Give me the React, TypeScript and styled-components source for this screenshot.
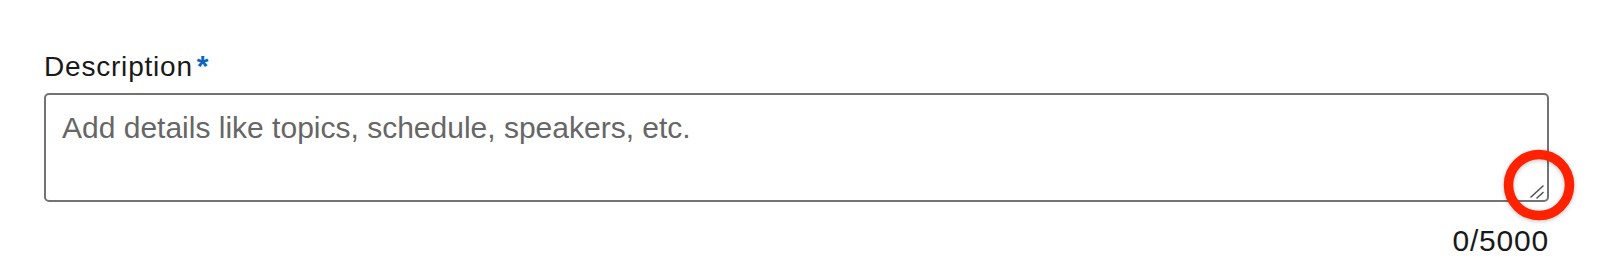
import React, { useState } from 'react';
import styled, { createGlobalStyle } from 'styled-components';

const GlobalStyle = createGlobalStyle`
  html, body {
    margin: 0;
    padding: 0;
    background: #ffffff;
  }
  body {
    font-family: "Liberation Sans", Arial, sans-serif;
    color: #191919;
  }
`;

const Page = styled.div`
  padding: 47px 51px 0 44px;
`;

const Field = styled.div`
  display: flex;
  flex-direction: column;
`;

const Label = styled.label`
  display: flex;
  align-items: flex-start;
  font-size: 28px;
  line-height: 40px;
  letter-spacing: 0.8px;
  color: #191919;
  margin-bottom: 6px;
`;

const Required = styled.span`
  color: #0a66c2;
  margin-left: 4px;
  font-size: 30px;
  font-weight: 700;
  line-height: 38px;
  letter-spacing: 0;
`;

const InputWrapper = styled.div`
  position: relative;
  display: flex;
`;

const TextArea = styled.textarea`
  box-sizing: border-box;
  width: 100%;
  height: 109px;
  margin: 0;
  padding: 13px 16px;
  border: 2px solid #737373;
  border-radius: 5px;
  font-family: "Liberation Sans", Arial, sans-serif;
  font-size: 30px;
  line-height: 40px;
  color: #191919;
  background: #ffffff;
  resize: none;
  outline: none;

  &::placeholder {
    color: #666666;
  }
`;

const Grip = styled.svg`
  position: absolute;
  right: 4px;
  bottom: 3px;
  pointer-events: none;
`;

const Highlight = styled.svg`
  position: absolute;
  right: -26px;
  bottom: -19px;
  pointer-events: none;
  filter: drop-shadow(0 1px 2px rgba(0, 0, 0, 0.25));
`;

const Counter = styled.div`
  align-self: flex-end;
  margin-top: 19px;
  font-size: 30px;
  line-height: 40px;
  letter-spacing: 0.8px;
  color: #191919;
`;

const MAX = 5000;

const App: React.FC = () => {
  const [value, setValue] = useState('');

  return (
    <>
      <GlobalStyle />
      <Page>
        <Field>
          <Label htmlFor="description">
            Description<Required>*</Required>
          </Label>
          <InputWrapper>
            <TextArea
              id="description"
              value={value}
              maxLength={MAX}
              onChange={e => setValue(e.target.value)}
              placeholder="Add details like topics, schedule, speakers, etc."
            />
            <Grip width="16" height="16" viewBox="0 0 16 16">
              <path d="M2 14 L14 3 M8 15 L14 9.5" stroke="#555" strokeWidth="1.6" strokeLinecap="round" fill="none" />
            </Grip>
            <Highlight width="72" height="72" viewBox="0 0 72 72">
              <circle cx="36" cy="36" r="30.5" stroke="#ff2200" strokeWidth="9.5" fill="none" />
            </Highlight>
          </InputWrapper>
          <Counter>
            {value.length}/{MAX}
          </Counter>
        </Field>
      </Page>
    </>
  );
};

export default App;
